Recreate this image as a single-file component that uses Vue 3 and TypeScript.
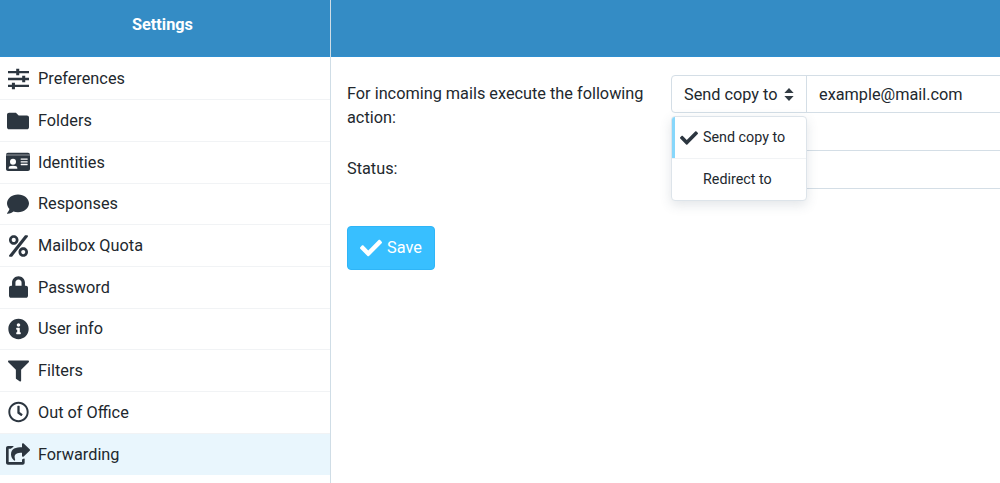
<script setup lang="ts">
interface Item { label: string; vb: string; d: string; w: number; active?: boolean }
const items: Item[] = [
  { label: 'Preferences', vb: '0 0 512 512', w: 21, d: 'M0 58h200V8h74v50h238v56H274v50h-74v-50H0zM0 228h346v-50h74v50h92v56h-92v50h-74v-50H0zM0 398h95v-50h74v50h343v56H169v50H95v-50H0z' },
  { label: 'Folders', vb: '0 0 512 512', w: 22, d: 'M464 128H272l-64-64H48C21.49 64 0 85.49 0 112v288c0 26.51 21.49 48 48 48h416c26.51 0 48-21.49 48-48V176c0-26.51-21.49-48-48-48z' },
  { label: 'Identities', vb: '0 0 576 512', w: 24, d: 'M528 36H48C21.500 36 0 57.500 0 84v340c0 26.500 21.500 48 48 48h480c26.500 0 48-21.500 48-48V84c0-26.500-21.500-48-48-48zM0 80h576v16H0zm168 98a72 72 0 1 1 0 144 72 72 0 0 1 0-144zM64 404c0-44 32-60 104-60s104 16 104 60v12H64zm296-232h152a8 8 0 0 1 8 8v16a8 8 0 0 1-8 8H360a8 8 0 0 1-8-8v-16a8 8 0 0 1 8-8zm0 64h152a8 8 0 0 1 8 8v16a8 8 0 0 1-8 8H360a8 8 0 0 1-8-8v-16a8 8 0 0 1 8-8zm0 64h152a8 8 0 0 1 8 8v16a8 8 0 0 1-8 8H360a8 8 0 0 1-8-8v-16a8 8 0 0 1 8-8z' },
  { label: 'Responses', vb: '0 0 512 512', w: 22, d: 'M256 32C114.600 32 0 125.100 0 240c0 49.600 21.400 95 57 130.700C44.500 421.100 2.700 466 2.200 466.500c-2.200 2.300-2.800 5.700-1.500 8.700S4.800 480 8 480c66.300 0 116-31.800 140.600-51.400 32.700 12.300 69 19.400 107.400 19.400 141.400 0 256-93.100 256-208S397.400 32 256 32z' },
  { label: 'Mailbox Quota', vb: '0 0 448 512', w: 19, d: 'M112 224c61.900 0 112-50.100 112-112S173.900 0 112 0 0 50.100 0 112s50.100 112 112 112zm0-160c26.500 0 48 21.500 48 48s-21.500 48-48 48-48-21.500-48-48 21.500-48 48-48zm224 224c-61.900 0-112 50.100-112 112s50.100 112 112 112 112-50.100 112-112-50.100-112-112-112zm0 160c-26.500 0-48-21.500-48-48s21.500-48 48-48 48 21.500 48 48-21.500 48-48 48zM392.300.2l31.600-.1c19.400-.1 30.900 21.800 19.700 37.800L77.400 501.600a23.950 23.950 0 0 1-19.600 10.200l-33.400.1c-19.500 0-30.900-21.900-19.700-37.800l368-463.700C377.200 4.600 384.500.2 392.300.2z' },
  { label: 'Password', vb: '0 0 448 512', w: 19, d: 'M400 224h-24v-72C376 68.200 307.800 0 224 0S72 68.200 72 152v72H48c-26.500 0-48 21.500-48 48v192c0 26.500 21.500 48 48 48h352c26.500 0 48-21.500 48-48V272c0-26.500-21.500-48-48-48zm-104 0H152v-72c0-39.700 32.300-72 72-72s72 32.300 72 72v72z' },
  { label: 'User info', vb: '0 0 512 512', w: 21, d: 'M256 8C119.043 8 8 119.083 8 256c0 136.997 111.043 248 248 248s248-111.003 248-248C504 119.083 392.957 8 256 8zm0 110c23.196 0 42 18.804 42 42s-18.804 42-42 42-42-18.804-42-42 18.804-42 42-42zm56 254c0 6.627-5.373 12-12 12h-88c-6.627 0-12-5.373-12-12v-24c0-6.627 5.373-12 12-12h12v-64h-12c-6.627 0-12-5.373-12-12v-24c0-6.627 5.373-12 12-12h64c6.627 0 12 5.373 12 12v100h12c6.627 0 12 5.373 12 12v24z' },
  { label: 'Filters', vb: '0 0 512 512', w: 21, d: 'M487.976 0H24.028C2.710 0-8.047 25.866 7.058 40.971L192 225.941V432c0 7.831 3.821 15.170 10.237 19.662l80 55.980C298.020 518.690 320 507.493 320 487.980V225.941l184.947-184.970C520.021 25.896 509.338 0 487.976 0z' },
  { label: 'Out of Office', vb: '0 0 512 512', w: 21, d: 'M256 8C119 8 8 119 8 256s111 248 248 248 248-111 248-248S393 8 256 8zm0 448c-110.500 0-200-89.500-200-200S145.500 56 256 56s200 89.500 200 200-89.500 200-200 200zm61.800-104.400l-84.900-61.700c-3.100-2.300-4.900-5.900-4.900-9.700V116c0-6.600 5.400-12 12-12h32c6.600 0 12 5.400 12 12v141.700l66.800 48.600c5.400 3.900 6.500 11.400 2.600 16.800L334.600 349c-3.900 5.300-11.400 6.500-16.800 2.600z' },
  { label: 'Forwarding', vb: '0 0 576 512', w: 24, active: true, d: 'M568.482 177.448L424.479 313.433C409.300 327.768 384 317.140 384 295.985v-71.963c-144.575.970-205.566 35.113-164.775 171.353 4.483 14.973-12.846 26.567-25.006 17.330C155.252 383.105 120 326.488 120 269.339c0-143.937 117.599-172.500 264-173.312V24.012c0-21.174 25.317-31.768 40.479-17.448l144.003 135.988c10.020 9.463 10.028 25.425 0 34.896zM384 379.128V448H64V128h50.916a11.990 11.990 0 0 0 8.648-3.693c14.953-15.568 32.237-27.890 51.014-37.676C186.806 80.260 182.274 64 168.707 64H48C21.490 64 0 85.490 0 112v352c0 26.510 21.490 48 48 48h352c26.510 0 48-21.490 48-48v-88.806c0-8.288-8.197-14.066-16.011-11.302-4.560 1.610-9.130 2.807-13.649 3.398-6.080.795-10.340 6.150-10.340 12.838z' }
]
const check = 'M173.898 439.404l-166.400-166.400c-9.997-9.997-9.997-26.206 0-36.204l36.203-36.204c9.997-9.998 26.207-9.998 36.204 0L192 312.690 432.095 72.596c9.997-9.997 26.207-9.997 36.204 0l36.203 36.204c9.997 9.997 9.997 26.206 0 36.204l-294.400 294.401c-9.998 9.997-26.207 9.997-36.204-.001z'
</script>

<template>
  <div class="page">
    <aside class="side">
      <header class="side-head">Settings</header>
      <nav class="menu">
        <a v-for="it in items" :key="it.label" class="row" :class="{ active: it.active }">
          <span class="ico"><svg :viewBox="it.vb" :width="it.w" height="22" fill="currentColor" fill-rule="evenodd"><path :d="it.d" /></svg></span>
          <span>{{ it.label }}</span>
        </a>
      </nav>
    </aside>
    <main class="main">
      <header class="main-head"></header>
      <div class="content">
        <form class="form" @submit.prevent>
          <div class="label two">For incoming mails execute the following action:</div>
          <div class="fields">
            <div class="group">
              <div class="select">Send copy to
                <svg class="sort" viewBox="0 0 10 14" width="10" height="13" fill="currentColor"><path d="M5 0l5 5.500H0zM5 14L0 8.500h10z" /></svg>
              </div>
              <div class="email">example@mail.com</div>
              <ul class="dropdown">
                <li class="opt on"><svg viewBox="0 0 512 512" width="18" height="18" fill="currentColor"><path :d="check" /></svg>Send copy to</li>
                <li class="opt">Redirect to</li>
              </ul>
            </div>
            <div class="blank"></div>
          </div>
          <div class="label">Status:</div>
          <div class="blank tall"></div>
        </form>
        <button class="save" type="button"><svg viewBox="0 0 512 512" width="22" height="22" fill="currentColor"><path :d="check" /></svg>Save</button>
      </div>
    </main>
  </div>
</template>

<style>
html, body { margin: 0; overflow: hidden; background: #fff; }
</style>

<style scoped>
.page { display: flex; width: 1000px; height: 483px; overflow: hidden; font-family: Roboto, "Liberation Sans", sans-serif; font-size: 16.300px; color: #22282e; }
.side { flex: 0 0 330px; border-right: 1px solid #cfdde6; }
.side-head, .main-head { height: 57px; box-sizing: border-box; background: #348cc5; border-bottom: 1px solid #2f8fd0; }
.side-head { display: flex; align-items: center; justify-content: center; color: #fff; font-weight: 700; font-size: 16.300px; padding: 0 5px 7px 0; }
.menu { display: flex; flex-direction: column; padding-top: 1.500px; }
.row { display: flex; align-items: center; height: 41.700px; box-sizing: border-box; border-bottom: 1px solid #f1f3f5; }
.row.active { background: #e9f6fd; border-bottom-color: #e9f6fd; }
.ico { display: flex; justify-content: center; width: 24px; margin: 0 8px 0 6px; color: #2c3640; }
.main { flex: 1; min-width: 0; }
.content { padding: 18px 0 0 16px; }
.form { display: grid; grid-template-columns: 324px 500px; }
.label { line-height: 24px; padding-top: 6px; width: 305px; }
.label.two { padding-top: 7px; }
.fields { display: flex; flex-direction: column; }
.group { position: relative; display: flex; height: 38px; box-sizing: border-box; border: 1px solid #d4dee6; border-radius: 4px 0 0 4px; }
.select { display: flex; align-items: center; gap: 6px; width: 135px; padding: 0 0 0 12px; box-sizing: border-box; border-right: 1px solid #d4dee6; white-space: nowrap; }
.sort { color: #333c44; }
.email { display: flex; align-items: center; padding-left: 12px; }
.blank { height: 37.500px; box-sizing: border-box; border-bottom: 1px solid #d4dee6; }
.blank.tall { height: 38px; }
.dropdown { position: absolute; left: -1px; top: 40px; width: 136px; height: 85px; margin: 0; padding: 0; list-style: none; background: #fff; box-sizing: border-box; border: 1px solid #dde4ea; border-radius: 4px; box-shadow: 0 4px 12px rgba(60, 80, 100, 0.15); font-size: 14.300px; z-index: 2; overflow: hidden; }
.opt { position: relative; display: flex; align-items: center; height: 41.500px; padding-left: 31px; box-sizing: border-box; }
.opt.on { border-bottom: 1px solid #f1f3f5; }
.opt.on::before { content: ""; position: absolute; left: 0; top: 0; bottom: 0; width: 3px; background: #87d7fb; }
.opt svg { position: absolute; left: 8px; top: 12px; color: #2c3640; }
.save { display: flex; align-items: center; gap: 5px; width: 88px; height: 44px; margin-top: 37px; padding: 0 0 0 12px; background: #38bfff; border: 1px solid #2fb5f7; border-radius: 4px; color: #fff; font: inherit; }
</style>
